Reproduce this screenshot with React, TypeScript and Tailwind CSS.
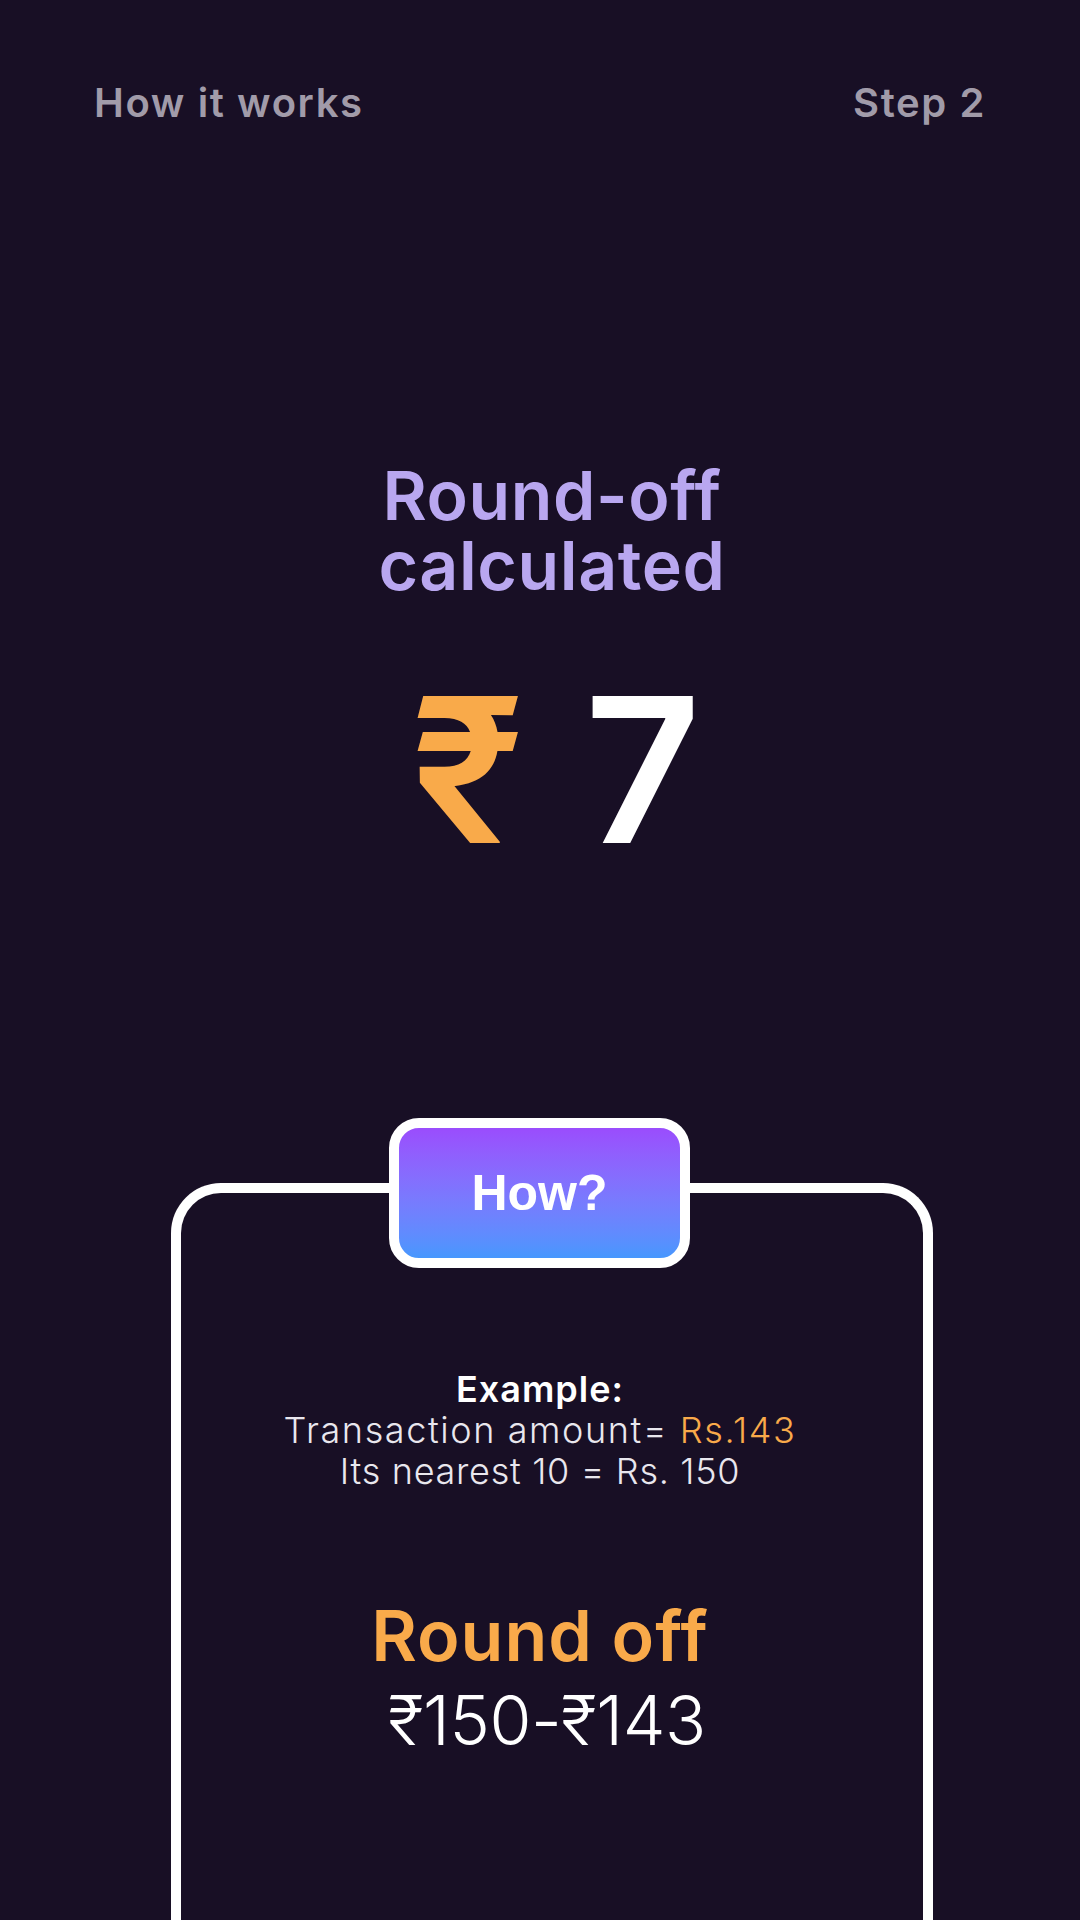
export default function App() {
  return (
    <div className="h-[1920px] w-[1080px] overflow-hidden bg-[#180f25] font-['Inter',sans-serif]">
      <div className="flex justify-between px-[94px] pt-[79px] text-[40px] font-semibold leading-[48px] tracking-[1.6px] text-[#a19ba9]">
        <span>How it works</span>
        <span>Step 2</span>
      </div>

      <h1 className="mt-[333px] pl-[24px] text-center text-[68px] font-semibold leading-[70px] tracking-[0.6px] text-[#b9a7f0]">
        Round-off
        <br />
        calculated
      </h1>

      <div className="mt-[69px] flex justify-center gap-[60px] pl-[32px] text-[202px] font-semibold leading-[202px]">
        <span className="text-[#f9aa4a]">₹</span>
        <span className="text-white">7</span>
      </div>

      <div className="relative ml-[171px] mt-[312px] h-[800px] w-[762px] rounded-t-[50px] border-[10px] border-b-0 border-white pr-[24px]">
        <div className="absolute left-[208px] top-[-75px] flex h-[150px] w-[301px] items-center justify-center rounded-[30px] border-[10px] border-white bg-gradient-to-b from-[#9a4cfd] to-[#4697fe]">
          <span className="font-['Liberation_Sans',Arial,sans-serif] text-[50px] font-bold text-white">How?</span>
        </div>

        <div className="pt-[176px] text-center text-[36px] leading-[41px]">
          <p className="font-semibold tracking-[1px] text-white">Example:</p>
          <p className="font-light tracking-[1.6px] text-[#e9e7ee]">
            Transaction amount= <span className="text-[#f9aa4a]">Rs.143</span>
          </p>
          <p className="font-light tracking-[0.7px] text-[#e9e7ee]">Its nearest 10 = Rs. 150</p>
        </div>

        <div className="mt-[102px] text-center leading-[84px]">
          <p className="text-[70px] font-semibold tracking-[1px] text-[#f9aa4a]">Round off</p>
          <p className="pl-[14px] text-[68px] font-light tracking-[-0.4px] text-white">₹150-₹143</p>
        </div>
      </div>
    </div>
  );
}
